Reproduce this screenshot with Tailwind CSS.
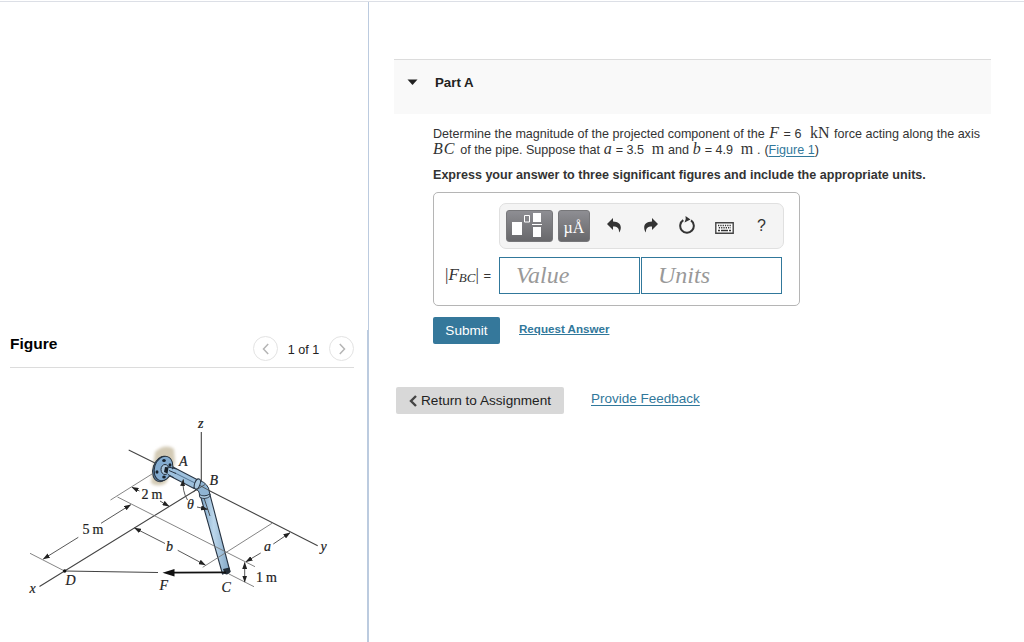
<!DOCTYPE html>
<html lang="en">
<head>
    <meta charset="UTF-8">
    <meta name="viewport" content="width=device-width, initial-scale=1.0">
    <title>Part A</title>
    <script src="https://cdn.jsdelivr.net/npm/@tailwindcss/browser@4"></script>
</head>
<body class="bg-white h-screen overflow-hidden flex flex-col text-[#333] font-['Liberation_Sans',Arial,sans-serif]">
    <div class="h-px mt-px shrink-0 bg-[#dcdfe6]"></div>
    <div class="flex flex-1 min-h-0">

        <!-- Figure column -->
        <aside class="w-[369px] shrink-0 flex flex-col">
            <div class="h-[328px] shrink-0 border-r border-[#bccbdf]"></div>
            <div class="flex-1 min-h-0 border-r-2 border-[#bccbdf] pl-[10px] pr-[13px]">
                <div class="h-[38px] flex items-center border-b border-[#dcdcdc]">
                    <h2 class="text-[15.5px] leading-5 font-bold text-black -mt-[9px] flex-1">Figure</h2>
                    <button class="size-[25px] rounded-full border border-[#e3e3e3] flex items-center justify-center">
                        <svg class="size-3" viewBox="0 0 12 12" fill="none" stroke="#b5b5b5" stroke-width="1.5"><path d="M8.200 1 3.500 6l4.700 5"/></svg>
                    </button>
                    <span class="text-[12.6px] w-[51px] text-center pt-[3px] text-[#222]">1 of 1</span>
                    <button class="size-[25px] rounded-full border border-[#e3e3e3] flex items-center justify-center">
                        <svg class="size-3" viewBox="0 0 12 12" fill="none" stroke="#b5b5b5" stroke-width="1.5"><path d="m3.800 1 4.700 5-4.700 5"/></svg>
                    </button>
                </div>
                <svg class="mt-8 -ml-[10px] w-[360px] h-[210px]" viewBox="0 400 360 210" font-family="'Liberation Serif', serif" font-size="14">
                    <defs>
                        <marker id="tip" viewBox="0 0 7 5" refX="6.500" refY="2.500" markerWidth="7" markerHeight="5" markerUnits="userSpaceOnUse" orient="auto-start-reverse"><path d="M0 0 7 2.500 0 5z" fill="#222"/></marker>
                        <filter id="soft" x="-50%" y="-50%" width="200%" height="200%"><feGaussianBlur stdDeviation="1.600"/></filter>
                        <linearGradient id="pipe" x1="0" y1="0" x2="1" y2="0"><stop offset="0" stop-color="#7ba2c4"/><stop offset=".45" stop-color="#bcd7ec"/><stop offset="1" stop-color="#80a5c4"/></linearGradient>
                    </defs>
                    <path d="M155 452q10-9 19-3l1 14-9 20q-8 5-15 0z" fill="#d3cab5" filter="url(#soft)"/>
                    <!-- axes -->
                    <g stroke="#444" stroke-width="1.100" fill="none">
                        <path d="M128.700 450 156 463.500M39.500 586.500 200 487.500M207 489.500 317.700 545.700M201.300 432V484"/>
                        <path d="M64.500 571 158 572.500"/>
                    </g>
                    <!-- extension lines -->
                    <g stroke="#777" stroke-width=".9" fill="none">
                        <path d="M152 474 110.500 500M30 553.300 64.500 571M229 574 254 586.700"/>
                    </g>
                    <!-- pipe -->
                    <path d="M200.300 495.500 209.800 494 230 571.500 222.500 574z" fill="url(#pipe)" stroke="#273443" stroke-width="1.100"/>
                    <path d="m223 569 6.500-1.500 1 4.500q-3 4-6 1.500z" fill="#222c36"/>
                    <path d="M172 466.500 197 479.500 194 488.500 168 475z" fill="#9dc0dd" stroke="#273443" stroke-width="1.100"/>
                    <path d="M171 471 195 483" stroke="#4d6c89" stroke-width=".9"/>
                    <path d="M197 480Q205 481 208.500 488L210 495 200.500 497 198.500 491 194 488z" fill="#8fb4d3" stroke="#273443" stroke-width="1"/>
                    <ellipse cx="197.300" cy="484" rx="2.700" ry="5.300" transform="rotate(20 197.300 484)" fill="#a9c8e0" stroke="#273443"/>
                    <path d="M199.300 494.500q5 3 10.500-.5v2.500q-5 3.500-10 .8z" fill="#b1cee4" stroke="#273443" stroke-width=".9"/>
                    <path d="M117.500 497 255 566.700M202.700 567.300 272 523.300" stroke="#777" stroke-width=".9"/>
                    <!-- flange -->
                    <ellipse cx="162" cy="469" rx="9" ry="13" transform="rotate(18 162 469)" fill="#557796" stroke="#26313d"/>
                    <ellipse cx="163.500" cy="468.500" rx="9" ry="12.500" transform="rotate(18 163.500 468.500)" fill="#83abcf" stroke="#26313d"/>
                    <g fill="#18212a">
                        <ellipse cx="164" cy="460.500" rx="1.800" ry="1.500"/><ellipse cx="157" cy="472" rx="1.500" ry="1.800"/><ellipse cx="164" cy="477" rx="1.800" ry="1.500"/><ellipse cx="170" cy="465" rx="1.500" ry="1.700"/>
                    </g>
                    <ellipse cx="165" cy="469.500" rx="4" ry="5" fill="#a9c5dc" stroke="#26313d"/>
                    <path d="m165 467 5 .5-1.500 6.500-4.500-2z" fill="#18212a"/>
                    <path d="m168.500 467.500 7 3-2.500 6.500-5.500-3z" fill="#9dc0dd"/>
                    <path d="m168.500 467 8 2M168 474.500l6 3.200M169 470.500l7 3" stroke="#273443" stroke-width="1"/>
                    <path d="M193 492 205 484.500M200 485.500 210 491" stroke="#444" stroke-width=".8"/>
                    <path d="M204 498 210 516" stroke="#333" stroke-width=".8"/>
                    <!-- dimensions -->
                    <g stroke="#444" stroke-width=".9" fill="none">
                        <path marker-end="url(#tip)" d="M139.500 491 132 487.300"/>
                        <path marker-end="url(#tip)" d="M160 501 169 506.300"/>
                        <path marker-end="url(#tip)" d="M101 523.300 130.700 504.700"/>
                        <path marker-end="url(#tip)" d="M78.300 537.300 43.300 559"/>
                        <path marker-end="url(#tip)" d="M165 543.500 134.500 528"/>
                        <path marker-end="url(#tip)" d="M177.700 550.300 205.300 565"/>
                        <path marker-end="url(#tip)" d="M260.700 553 246 561.700"/>
                        <path marker-end="url(#tip)" d="M273.300 544 290 532.700"/>
                        <path marker-start="url(#tip)" marker-end="url(#tip)" d="M244.700 562.500V582"/>
                        <path marker-end="url(#tip)" d="M187.500 500Q182 491 183.300 479.500"/>
                        <path marker-end="url(#tip)" d="M197 507 207.500 509.300"/>
                    </g>
                    <path d="M172 572.700 226 572.300" stroke="#111" stroke-width="1.800"/>
                    <path d="m162.500 572.700 12-3.700v7.400z" fill="#111"/>
                    <circle cx="64.700" cy="571" r="1.700" fill="#111"/>
                    <g fill="#222" stroke="#222" stroke-width=".2">
                        <g font-style="italic">
                            <text x="198" y="427.500">z</text><text x="179" y="465.500">A</text><text x="209.500" y="485">B</text>
                            <text x="187" y="508.500">θ</text><text x="166" y="550.500">b</text><text x="264" y="550.500">a</text>
                            <text x="320.500" y="551">y</text><text x="29.500" y="593">x</text><text x="65.500" y="585">D</text>
                            <text x="159.500" y="589.500">F</text><text x="221.500" y="591.500">C</text>
                        </g>
                        <text x="141.500" y="498.500" textLength="21">2 m</text>
                        <text x="82.500" y="534" textLength="21">5 m</text>
                        <text x="256" y="581.500" textLength="21">1 m</text>
                    </g>
                </svg>
            </div>
        </aside>

        <!-- Question column -->
        <main class="w-[622px] pl-[25px] pt-[57px]">
            <div class="h-[55px] border-t border-[#dcdcdc] bg-[#f9f9f9] flex pl-[13px] pt-[14px]">
                <svg class="w-[11px] h-[6px] mt-[5px]" viewBox="0 0 11 6"><path d="M.5.500h10L5.500 6z" fill="#222"/></svg>
                <h3 class="text-[13.3px] leading-[17px] font-bold ml-[17px] text-[#222]">Part A</h3>
            </div>

            <div class="pl-[39px]">
                <div class="pt-[10px] text-[12.57px] leading-[17px] whitespace-nowrap">
                    <p class="w-[547px] h-4 flex items-baseline justify-between">
                        <span>Determine the magnitude of the projected component of the</span>
                        <i class="font-['Liberation_Serif',serif] text-base leading-[17px]">F</i>
                        <span>= 6</span>
                        <span class="font-['Liberation_Serif',serif] text-base leading-[17px] ml-1">kN</span>
                        <span>force acting along the axis</span>
                    </p>
                    <p class="w-[386px] h-[17px] flex items-baseline justify-between">
                        <i class="font-['Liberation_Serif',serif] text-base leading-[17px] tracking-[1px] mr-px">BC</i>
                        <span>of the pipe. Suppose that</span>
                        <i class="font-['Liberation_Serif',serif] text-base leading-[17px]">a</i>
                        <span>= 3.5</span>
                        <span class="font-['Liberation_Serif',serif] text-base leading-[17px] ml-1">m</span>
                        <span>and</span>
                        <i class="font-['Liberation_Serif',serif] text-base leading-[17px]">b</i>
                        <span>= 4.9</span>
                        <span class="font-['Liberation_Serif',serif] text-base leading-[17px] ml-1">m</span>
                        <span>.</span>
                        <span>(<a href="#" class="text-[#31789b] underline underline-offset-2">Figure 1</a>)</span>
                    </p>
                    <p class="font-bold mt-[10px] h-[17px]">Express your answer to three significant figures and include the appropriate units.</p>
                </div>

                <div class="mt-2 w-[367px] h-[114px] border border-[#b5b5b5] rounded-[5px] pt-[10px]">
                    <div class="ml-[65px] w-[285px] h-[46px] border border-[#e0e0e0] rounded-[7px] bg-[#f4f4f4] flex items-center pl-[6px]">
                        <button class="w-[47px] h-8 rounded-[3px] bg-linear-to-b from-[#8e8e93] to-[#68686b] border border-[#77777a]">
                            <svg class="w-[45px] h-[30px]" viewBox="0 0 45 30">
                                <path d="M5 11h10v13H5zM26 2h8v9h-8zM26 16h8v10h-8zM25 13h10v1H25z" fill="#fff"/>
                                <path d="M17.500 4.500h5v6.500h-5z" fill="none" stroke="#fff"/>
                            </svg>
                        </button>
                        <button class="ml-[5px] w-8 h-8 rounded-[3px] bg-linear-to-b from-[#8e8e93] to-[#68686b] border border-[#77777a] text-white text-base leading-[30px] pt-[2px] font-['Liberation_Serif',serif]">µÅ</button>
                        <svg class="ml-[17px] mb-[2px] w-[14px] h-[15px]" viewBox="0 0 14 15"><path d="M6 0v3.500c5 .2 7.800 2.300 7.800 6 0 2-.6 3.700-1.800 5 .3-4.200-1.500-6-6-6V12L0 6z" fill="#333"/></svg>
                        <svg class="ml-[23px] mb-[2px] w-[14px] h-[15px]" viewBox="0 0 14 15"><path d="M8 0v3.500C3 3.700.200 5.800.200 9.500c0 2 .6 3.700 1.800 5-.3-4.200 1.500-6 6-6V12l6-6z" fill="#333"/></svg>
                        <svg class="ml-[21px] mb-[2px] w-4 h-[18px]" viewBox="0 0 16 18"><path d="M4.300 4.200A6.800 6.800 0 1 0 12 4.400" fill="none" stroke="#333" stroke-width="2"/><path d="M6.500 0 11.500 3.500 5.500 6.500q2-2.800 1-6.500z" fill="#333"/></svg>
                        <svg class="ml-5 mt-[3px] w-[19px] h-3" viewBox="0 0 19 12">
                            <path d="M.8.800h17.400v10.400H.8z" fill="#fff" stroke="#444" stroke-width="1.400"/>
                            <path d="M3 3.500h13M3.800 5.800h12" stroke="#333" stroke-width="1.400" stroke-dasharray="1.300 1"/>
                            <path d="M3 8.500h2m1 0h7m1 0h2" stroke="#333" stroke-width="1.400"/>
                        </svg>
                        <span class="ml-[23px] -mt-px text-base text-[#333]">?</span>
                    </div>
                    <div class="mt-2 flex items-center">
                        <div class="w-[65px] pl-[11px] flex items-center justify-between pr-2">
                            <span class="font-['Liberation_Serif',serif] text-[17px] leading-6 whitespace-nowrap">|<i>F<span class="text-[13px] relative top-[2px]">BC</span></i>|</span>
                            <span class="text-[13px]">=</span>
                        </div>
                        <input type="text" placeholder="Value" class="w-[141px] h-[37px] border border-[#31789b] pl-4 pb-px text-2xl italic font-['Liberation_Serif',serif] placeholder-[#999]">
                        <input type="text" placeholder="Units" class="ml-px w-[141px] h-[37px] border border-[#31789b] pl-4 pb-px text-2xl italic font-['Liberation_Serif',serif] placeholder-[#999]">
                    </div>
                </div>

                <div class="mt-[11px] flex items-start">
                    <button class="w-[67px] h-[27px] rounded-[2px] bg-[#35789b] text-white text-[13.6px] pt-px">Submit</button>
                    <a href="#" class="ml-[19px] mt-1 text-[11.6px] leading-4 font-bold text-[#31789b] underline underline-offset-1">Request Answer</a>
                </div>
            </div>

            <div class="mt-[43px] ml-[2px] flex items-start">
                <button class="w-[168px] h-[27px] rounded-[2px] bg-[#d8d8d8] text-[#222] text-[13.6px] flex items-center justify-center pt-px">
                    <svg class="w-2 h-3 mr-1 mb-px" viewBox="0 0 8 12" fill="none" stroke="#444" stroke-width="2.400"><path d="M7 1 2 6l5 5"/></svg>
                    Return to Assignment
                </button>
                <a href="#" class="ml-[27px] mt-[2px] text-[13.5px] leading-5 text-[#31789b] underline underline-offset-2">Provide Feedback</a>
            </div>
        </main>
    </div>
</body>
</html>
